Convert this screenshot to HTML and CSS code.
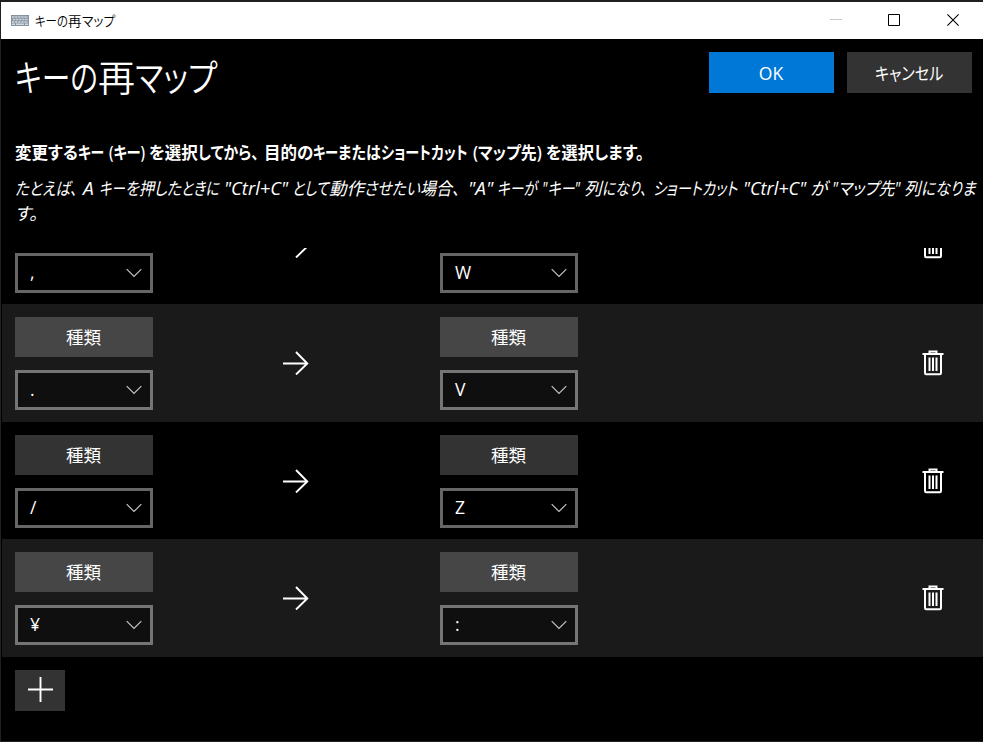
FILE: index.html
```
<!DOCTYPE html>
<html lang="ja">
<head>
<meta charset="utf-8">
<title>キーの再マップ</title>
<link rel="stylesheet" href="styles.css">
</head>
<body>
<svg class="defs" aria-hidden="true">
  <symbol id="chevron" viewBox="0 0 16 10"><path d="M.7 1.200 8 8.500l7.300-7.300" fill="none" stroke="#c4c4c4" stroke-width="1.200"/></symbol>
  <symbol id="arrow" viewBox="0 0 26 24"><path d="M0 12.500h24M13 1l11.300 11.500L13 23.500" fill="none" stroke="#fff" stroke-width="1.900"/></symbol>
  <symbol id="trash" viewBox="0 0 22 26"><path d="M.5 4h21M7.500 4V1.500h7V4M3 4v19q0 1.200 1.200 1.200h13.600q1.200 0 1.200-1.200V4M7.500 7.500v13.500M11 7.500v13.500M14.500 7.500v13.500" fill="none" stroke="#fff" stroke-width="2"/></symbol>
</svg>
<div class="window">
  <header class="titlebar">
    <svg class="app-icon" width="18" height="11" viewBox="0 0 18 11"><path fill="#8693a0" d="M0 0h18v11H0z"/><path d="M1 2h16M2 4.500h15M1 7h16" stroke="#d0d9e0" stroke-width="1.600" stroke-dasharray="2.300 .8"/><path d="M1 9.300h3m1 0h8m1 0h3" stroke="#d0d9e0" stroke-width="1.400"/></svg>
    <span class="caption"><span class="fit" style="--w:33px">キーの</span><span class="fit" style="--w:14px">再</span><span class="fit" style="--w:33px">マップ</span></span>
    <div class="controls">
      <svg width="12" height="12"><path d="M0 5.500h12" stroke="#c9c9c9"/></svg>
      <svg width="12" height="12"><path d="M.5.5h11v11H.5z" fill="none" stroke="#000"/></svg>
      <svg width="12" height="12"><path d="m.4.400 11.200 11.200M11.600.400.4 11.600" stroke="#000" stroke-width="1.100"/></svg>
    </div>
  </header>
  <main>
    <div class="heading">
      <h1><span class="fit" style="--w:83px">キーの</span><span class="fit" style="--w:37px">再</span><span class="fit" style="--w:82px">マップ</span></h1>
      <button class="ok">OK</button>
      <button class="cancel"><span class="fit" style="--w:68px">キャンセル</span></button>
    </div>
    <p class="lead"><span class="fit" style="--w:63px">変更する</span><span class="fit" style="--w:26px;--gap:5px">キー</span><span class="fit" style="--w:36px;--gap:4px">(キー)</span><span class="fit" style="--w:49px">を選択</span><span class="fit" style="--w:61px;--gap:5px">してから、</span><span class="fit" style="--w:49px">目的の</span><span class="fit" style="--w:25px">キー</span><span class="fit" style="--w:43px">または</span><span class="fit" style="--w:87px;--gap:5px">ショートカット</span><span class="fit" style="--w:69px;--gap:4px">(マップ先)</span><span class="fit" style="--w:48px">を選択</span><span class="fit" style="--w:50px">します。</span></p>
    <div class="example">
      <p><span class="fit" style="--w:62px;--gap:6px">たとえば、</span><span class="fit" style="--w:11px;--gap:5px">A</span><span class="fit" style="--w:26px">キー</span><span class="fit" style="--w:56px">を押した</span><span class="fit" style="--w:38px;--gap:5px">ときに</span><span class="fit" style="--w:64px;--gap:4px">"Ctrl+C"</span><span class="fit" style="--w:37px">として</span><span class="fit" style="--w:35px">動作</span><span class="fit" style="--w:56px">させたい</span><span class="fit" style="--w:40px;--gap:8px">場合、</span><span class="fit" style="--w:25px;--gap:4px">"A"</span><span class="fit" style="--w:40px;--gap:5px">キーが</span><span class="fit" style="--w:38px;--gap:4px">"キー"</span><span class="fit" style="--w:18px">列</span><span class="fit" style="--w:45px;--gap:6px">になり、</span><span class="fit" style="--w:84px;--gap:6px">ショートカット</span><span class="fit" style="--w:63px;--gap:4px">"Ctrl+C"</span><span class="fit" style="--w:17px;--gap:5px">が</span><span class="fit" style="--w:68px;--gap:4px">"マップ先"</span><span class="fit" style="--w:17px">列</span><span class="fit" style="--w:55px">になりま</span></p>
      <p><span class="fit" style="--w:23px">す。</span></p>
    </div>
    <div class="list">
      <div class="row short">
        <div class="key"><div class="combo">,<svg><use href="#chevron"/></svg></div></div>
        <svg class="arrow"><use href="#arrow"/></svg>
        <div class="key"><div class="combo">W<svg><use href="#chevron"/></svg></div></div>
        <svg class="trash"><use href="#trash"/></svg>
      </div>
      <div class="row alt">
        <div class="key"><button>種類</button><div class="combo">.<svg><use href="#chevron"/></svg></div></div>
        <svg class="arrow"><use href="#arrow"/></svg>
        <div class="key"><button>種類</button><div class="combo">V<svg><use href="#chevron"/></svg></div></div>
        <svg class="trash"><use href="#trash"/></svg>
      </div>
      <div class="row short">
        <div class="key"><button>種類</button><div class="combo">/<svg><use href="#chevron"/></svg></div></div>
        <svg class="arrow"><use href="#arrow"/></svg>
        <div class="key"><button>種類</button><div class="combo">Z<svg><use href="#chevron"/></svg></div></div>
        <svg class="trash"><use href="#trash"/></svg>
      </div>
      <div class="row alt">
        <div class="key"><button>種類</button><div class="combo">¥<svg><use href="#chevron"/></svg></div></div>
        <svg class="arrow"><use href="#arrow"/></svg>
        <div class="key"><button>種類</button><div class="combo">:<svg><use href="#chevron"/></svg></div></div>
        <svg class="trash"><use href="#trash"/></svg>
      </div>
    </div>
    <button class="add"><svg width="26" height="26"><path d="M1 12.500h25M13.500 0v25" stroke="#fff" stroke-width="1.900"/></svg></button>
  </main>
</div>
<script src="fit.js"></script>
</body>
</html>
```
FILE: styles.css
```
* { box-sizing: border-box; }
body { margin: 0; background: #000; font-family: "Open Sans", "Noto Sans CJK JP", sans-serif; color: #fff; }
.defs { position: absolute; width: 0; height: 0; }
.window { width: 983px; height: 742px; overflow: hidden; border: solid #202020; border-width: 2px 0 1px 1px; }
.titlebar { height: 37px; background: #fff; color: #000; display: flex; align-items: center; padding: 0 24px 1px 10px; }
.caption { margin: -1px 0 0 6px; font-size: 13.500px; font-weight: 350; white-space: nowrap; }
.controls { margin-left: auto; display: flex; gap: 47px; }
.controls svg { display: block; }
.controls svg:first-child { margin-right: -1px; }
main { padding-left: 1px; }
.fit { display: inline-block; width: var(--w); margin-right: var(--gap, 0); white-space: nowrap; font-feature-settings: "palt"; }
.fit > span { display: inline-block; transform-origin: 0 50%; }
button { border: 0; padding: 0 1px 2px 0; color: #fff; font: inherit; font-size: 17.500px; background: #333; display: flex; align-items: center; justify-content: center; }
.heading { display: flex; padding: 13px 11px 0 13px; height: 98px; }
h1 { margin: 2px auto 0 0; font-size: 37px; line-height: 48px; font-weight: 350; white-space: nowrap; }
.ok, .cancel { width: 125px; height: 41px; padding-bottom: 0; }
.ok { background: #0078d7; margin-right: 13px; }
p { margin: 0; white-space: nowrap; font-size: 17.500px; }
.lead { font-weight: 600; line-height: 30px; margin-left: 13px; }
.example { margin: 9px 0 0 13px; font-style: italic; height: 72px; }
.example p { line-height: 25px; }
.list { height: 409px; display: flex; flex-direction: column; justify-content: flex-end; overflow: hidden; }
.row { flex: none; height: 118px; padding: 13px 40px 0 13px; display: flex; }
.row.short { height: 117px; }
.alt { background: #1a1a1a; }
.key { width: 138px; display: grid; grid-template-rows: 40px 40px; gap: 13px; height: 93px; }
.key button { width: 138px; }
.alt .key button { background: #464646; }
.combo { grid-row: 2; border: 3px solid #666; display: flex; align-items: center; justify-content: space-between; padding: 0 8.500px 2px 12px; font-size: 17.500px; }
.alt .combo { background: #0f0f0f; border-color: #757575; }
.combo svg { width: 16px; height: 10px; margin-top: 2px; }
.arrow { width: 26px; height: 24px; margin: 34px 131px 0 130px; }
.trash { width: 22px; height: 26px; margin: 33px -1px 0 auto; }
.add { width: 50px; height: 41px; margin: 13px 0 0 13px; padding: 0; }
.add svg { margin-top: -1px; }
```
FILE: fit.js
```
// Condense each run of text to the advance width its segment asks for.
document.querySelectorAll('.fit').forEach(function (box) {
  var run = document.createElement('span');
  run.textContent = box.textContent;
  box.textContent = '';
  box.appendChild(run);
  run.style.transform = 'scaleX(' + box.clientWidth / run.offsetWidth + ')';
});
```
